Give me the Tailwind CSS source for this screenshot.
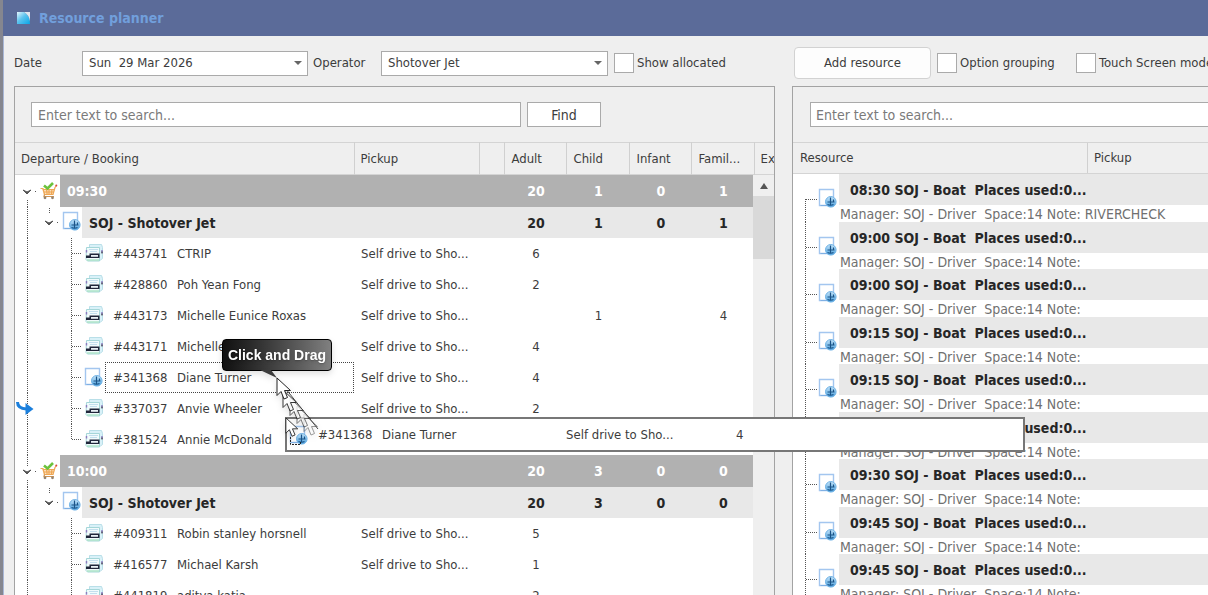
<!DOCTYPE html>
<html lang="en">
  <head>
    <meta charset="UTF-8" />
    <title>Resource planner</title>
    <script src="https://cdn.jsdelivr.net/npm/@tailwindcss/browser@4"></script>
  </head>
  <body
    class="relative h-screen overflow-hidden bg-[#efefef] font-['DejaVu_Sans_Condensed','Noto_Sans',sans-serif] text-[13px] leading-4 text-[#3c3c3c]"
  >
    <!-- icons -->
    <svg class="absolute size-0" aria-hidden="true">
      <defs>
        <linearGradient id="globe-fill" x1="0" y1="0" x2="0" y2="1">
          <stop offset="0" stop-color="#c4e4fa" />
          <stop offset="1" stop-color="#4a9fdc" />
        </linearGradient>
        <symbol id="doc" viewBox="0 0 20 20">
          <path d="M1.5 1.5h14v16h-14z" fill="#fff" stroke="#a3c6ef" stroke-width="1.4" />
          <path d="M2.5 17.5h13" stroke="#7fb0e4" />
          <circle cx="12.8" cy="13.8" r="5.3" fill="url(#globe-fill)" stroke="#6fb3e6" />
          <path d="M12.5 9.500v7.500M9.500 14h7M9.500 16.500q3 1.500 6 0M15.500 11.500v2" fill="none" stroke="#1b5488" stroke-width="1.2" />
        </symbol>
        <symbol id="printer" viewBox="0 0 20 20">
          <path d="M5.500 1.500h12l1 3v11l-2 1.500h-11z" fill="#d9f1f8" stroke="#b9dfe8" />
          <path d="M2.500 4.500h13v13.500h-12l-1.500-1.500z" fill="#f1fbfc" stroke="#a5d6d8" />
          <path d="M5 6.500h9M6 8.500h7" stroke="#c3dfee" />
          <path d="M2.500 7v2.500M18 7v3" stroke="#8d7cc0" stroke-width="1.400" />
          <path d="M17.500 8.500h1v2h-1z" fill="#333" />
          <path d="M2 12.500h3.500v-2h10v4.500h-13.500z" fill="#20263a" />
          <path d="M7 12h7v1.800h-7z" fill="#e9f1f5" />
          <path d="M3 17h12" stroke="#a9e3c4" stroke-width="1.400" />
        </symbol>
        <symbol id="cart" viewBox="0 0 18 18">
          <path d="M2 7l2 6h9l2-6z" fill="#fbe0bd" />
          <path d="M.5 6.500h2.500l1.500 6h8.500L15 5.500l1.500-2M3.500 7.500h11M4 10h10M6.500 7l.6 5M9 7v5M12 7l-.6 5" fill="none" stroke="#efa653" stroke-width="1.200" />
          <path d="M4.500 12.500l-.5 2h10" fill="none" stroke="#d09453" stroke-width="1.200" />
          <circle cx="5" cy="15.800" r="1.400" fill="#94836f" />
          <circle cx="12.500" cy="15.800" r="1.400" fill="#94836f" />
          <path d="M4 3.500l3.500 3L13 1" fill="none" stroke="#6cc23c" stroke-width="2.600" />
          <circle cx="16.300" cy="3.500" r="1" fill="#d8463a" />
        </symbol>
        <symbol id="chevron" viewBox="0 0 10 6">
          <path d="M1 1l4 4 4-4-4 2z" fill="#555" stroke="#555" />
        </symbol>
        <symbol id="pointer" viewBox="-1 -1 16 24">
          <path d="M0 0v17.500l4-4 3 7.500 3.500-1.500-3-7h6z" fill="#fff" stroke="#222" />
        </symbol>
      </defs>
    </svg>

    <div class="flex h-full flex-col border-l-3 border-[#85868f]">
      <header class="flex h-9 shrink-0 items-center gap-2 bg-[#5b6b99] pl-3.5">
        <svg class="size-3.5" viewBox="0 0 14 14" aria-hidden="true">
          <defs>
            <linearGradient id="logo-fill" x1="0" y1="0" x2="1" y2="1">
              <stop offset="0" stop-color="#e6f6fd" />
              <stop offset=".45" stop-color="#5cc3ee" />
              <stop offset="1" stop-color="#08a5e6" />
            </linearGradient>
          </defs>
          <path d="M0 1h7q6 3 6 12H0z" fill="url(#logo-fill)" />
          <path d="M7 1h6v9q-1-6-6-9z" fill="#dfe6ee" />
        </svg>
        <h1 class="text-sm font-bold text-[#719fdc]">Resource planner</h1>
      </header>

      <main class="flex min-h-0 flex-1 gap-[17px] border-l border-[#a9b7d6] pl-2.5">
        <!-- departures -->
        <section class="flex w-[761px] shrink-0 flex-col">
          <div class="flex h-[50px] shrink-0 items-center pt-1">
            <label for="date" class="w-[68px]">Date</label>
            <div class="relative w-[226px]">
              <select id="date" class="block h-[25px] w-full appearance-none border border-[#aaa] bg-white px-1.5">
                <option>Sun&nbsp; 29 Mar 2026</option>
              </select>
              <svg class="pointer-events-none absolute top-2.5 right-1.5 h-1 w-2" viewBox="0 0 8 4" aria-hidden="true"><path d="M0 0h8L4 4z" fill="#666" /></svg>
            </div>
            <label for="operator" class="w-[73px] pl-[5px]">Operator</label>
            <div class="relative w-[227px]">
              <select id="operator" class="block h-[25px] w-full appearance-none border border-[#aaa] bg-white px-1.5">
                <option>Shotover Jet</option>
              </select>
              <svg class="pointer-events-none absolute top-2.5 right-1.5 h-1 w-2" viewBox="0 0 8 4" aria-hidden="true"><path d="M0 0h8L4 4z" fill="#666" /></svg>
            </div>
            <input id="allocated" type="checkbox" class="ml-1.5 size-5 appearance-none border border-[#aaa] bg-white" />
            <label for="allocated" class="pl-[3px]">Show allocated</label>
          </div>

          <div class="relative min-h-0 flex-1 overflow-hidden border border-b-0 border-[#a3a3a3]">
            <form class="flex h-[55px] items-center gap-1.5 pl-4">
              <input type="text" aria-label="Search bookings" placeholder="Enter text to search..." class="h-[25px] w-[490px] border border-[#aaa] bg-white px-1.5 text-sm placeholder:text-[#7a7a7a]" />
              <button type="button" class="h-[25px] w-[74px] border border-[#aaa] bg-white text-sm">Find</button>
            </form>
            <table class="w-full table-fixed border-collapse text-left">
              <thead>
                <tr class="h-8 border-y border-[#d4d4d4]">
                  <th class="border-r border-[#d0d0d0] px-1.5 font-normal">Departure / Booking</th>
                  <th class="w-[125px] border-r border-[#d0d0d0] px-1.5 font-normal">Pickup</th>
                  <th class="w-[25px] border-r border-[#d0d0d0]"></th>
                  <th class="w-[62px] border-r border-[#d0d0d0] px-[7px] font-normal">Adult</th>
                  <th class="w-[63px] border-r border-[#d0d0d0] px-[7px] font-normal">Child</th>
                  <th class="w-[62px] border-r border-[#d0d0d0] px-[7px] font-normal">Infant</th>
                  <th class="w-[63px] border-r border-[#d0d0d0] px-[7px] font-normal">Famil...</th>
                  <th class="w-5 overflow-hidden pl-1.5 font-normal">Ex</th>
                </tr>
              </thead>
              <tbody id="bookings" class="bg-white"></tbody>
            </table>
            <!-- scrollbar -->
            <div class="absolute top-[88px] right-0 bottom-0 w-[21px] bg-[#efefef]">
              <div class="flex h-[21px] items-center justify-center">
                <svg class="h-1.5 w-2" viewBox="0 0 8 6" aria-hidden="true"><path d="M0 6h8L4 0z" fill="#555" /></svg>
              </div>
              <div class="h-[63px] bg-[#d9d9d9]"></div>
            </div>
          </div>
        </section>

        <!-- resources -->
        <section class="flex min-w-0 flex-1 flex-col">
          <div class="flex h-[50px] shrink-0 items-center pt-1 whitespace-nowrap">
            <button type="button" class="ml-0.5 h-8 w-[137px] shrink-0 rounded border border-[#d2d2d2] bg-[#fdfdfd]">Add resource</button>
            <input id="grouping" type="checkbox" class="ml-1.5 size-5 shrink-0 appearance-none border border-[#aaa] bg-white" />
            <label for="grouping" class="w-[119px] shrink-0 pl-[3px]">Option grouping</label>
            <input id="touch" type="checkbox" class="size-5 shrink-0 appearance-none border border-[#aaa] bg-white" />
            <label for="touch" class="pl-[3px]">Touch Screen mode</label>
          </div>

          <div class="min-h-0 flex-1 overflow-hidden border-t border-l border-[#a3a3a3] bg-white">
            <form class="flex h-[55px] items-center bg-[#efefef] pl-[17px]">
              <input type="text" aria-label="Search resources" placeholder="Enter text to search..." class="h-[25px] flex-1 border border-r-0 border-[#aaa] bg-white px-[5px] text-sm placeholder:text-[#7a7a7a]" />
            </form>
            <div class="flex h-8 items-center border-y border-[#d4d4d4] bg-[#efefef]">
              <div class="flex h-full w-[295px] items-center border-r border-[#d0d0d0] px-[7px]">Resource</div>
              <div class="px-1.5">Pickup</div>
            </div>
            <ul id="resources"></ul>
          </div>
        </section>
      </main>
    </div>

    <!-- row being dragged -->
    <div class="absolute top-[417px] left-[285px] flex h-[35px] w-[740px] items-center border-2 border-[#777] bg-white">
      <svg class="ml-0.5 size-5" aria-hidden="true"><use href="#doc" /></svg>
      <span class="ml-[9px] w-16">#341368</span>
      <span class="w-[184px]">Diane Turner</span>
      <span class="w-[170px]">Self drive to Sho...</span>
      <span>4</span>
    </div>

    <!-- drop position marker -->
    <svg class="absolute top-[402px] left-4 h-3.5 w-[18px]" viewBox="0 0 18 14" aria-hidden="true">
      <path d="M1.500 0q0 6.500 9 7" fill="none" stroke="#1b7fdc" stroke-width="3" />
      <path d="M9.500 1l8 6-8 6z" fill="#1b7fdc" />
    </svg>

    <!-- pointer trail -->
    <svg class="absolute top-[370px] left-[270px] h-20 w-16 drop-shadow-md" viewBox="270 370 64 80" aria-hidden="true">
      <use href="#pointer" x="303" y="413" width="16" height="24" opacity=".45" />
      <use href="#pointer" x="296" y="405" width="16" height="24" opacity=".6" />
      <use href="#pointer" x="289" y="397" width="16" height="24" opacity=".75" />
      <use href="#pointer" x="282" y="389" width="16" height="24" opacity=".9" />
      <path d="M277 378L318 429" stroke="#444" />
      <use href="#pointer" x="276" y="377" width="16" height="24" />
      <path d="M290.500 437v7.500h10v-3" fill="none" stroke="#222" stroke-dasharray="2 1" />
      <use href="#pointer" x="285" y="417" width="14" height="21" />
    </svg>

    <!-- callout -->
    <div class="absolute top-[339px] left-[222px] drop-shadow-md">
      <div class="flex h-8 w-[110px] items-center justify-center rounded border border-black bg-linear-to-r from-[#111] to-[#808080] font-['Liberation_Sans',sans-serif] text-sm font-bold text-white text-shadow-md">
        Click and Drag
      </div>
      <svg class="absolute top-[31px] left-[38px] h-2 w-[18px]" viewBox="0 0 18 8" aria-hidden="true"><path d="M0 0h11l6 8z" fill="#3c3c3c" /></svg>
    </div>

    <script>
      // booking: id, name, icon, pickup, adult, child, family
      const pickup = 'Self drive to Sho...';
      const departures = [
        {
          time: '09:30',
          totals: [20, 1, 0, 1],
          bookings: [
            ['#443741', 'CTRIP', 'printer', pickup, 6, '', ''],
            ['#428860', 'Poh Yean Fong', 'printer', pickup, 2, '', ''],
            ['#443173', 'Michelle Eunice Roxas', 'printer', pickup, '', 1, 4],
            ['#443171', 'Michelle', 'printer', pickup, 4, '', ''],
            ['#341368', 'Diane Turner', 'doc', pickup, 4, '', ''],
            ['#337037', 'Anvie Wheeler', 'printer', pickup, 2, '', ''],
            ['#381524', 'Annie McDonald', 'printer', '', '', '', ''],
          ],
        },
        {
          time: '10:00',
          totals: [20, 3, 0, 0],
          bookings: [
            ['#409311', 'Robin stanley horsnell', 'printer', pickup, 5, '', ''],
            ['#416577', 'Michael Karsh', 'printer', pickup, 1, '', ''],
            ['#441819', 'aditya katia', 'printer', '', 2, '', ''],
          ],
        },
      ];

      const cells = (values, bg) =>
        values.map((v) => `<td class="pl-0.5 text-center ${bg}">${v}</td>`).join('');

      const line = (d) =>
        `<path d="${d}" fill="none" stroke="#555" stroke-dasharray="1 1" />`;

      let rows = '';
      departures.forEach((dep, i) => {
        rows += `
          <tr class="h-8 text-sm leading-4 font-bold text-white">
            <td class="p-0">
              <div class="flex h-8 items-center">
                <svg class="h-8 w-[45px] shrink-0" aria-hidden="true">
                  ${line(i ? 'M12.500 0v12M12.500 25v7M20 16.500h2' : 'M12.500 25v7M20 16.500h2')}
                  <use href="#chevron" x="7" y="14" width="10" height="6" />
                  <use href="#cart" x="25" y="7" width="18" height="18" />
                </svg>
                <span class="flex h-full flex-1 items-center bg-[#b1b1b1] pl-[7px]">${dep.time}</span>
              </div>
            </td>
            <td class="bg-[#b1b1b1]"></td><td class="bg-[#b1b1b1]"></td>
            ${cells(dep.totals, 'bg-[#b1b1b1]')}
            <td></td>
          </tr>
          <tr class="h-[31px] text-sm leading-4 font-bold text-[#262626]">
            <td class="p-0">
              <div class="flex h-[31px] items-center">
                <svg class="h-[31px] w-[67px] shrink-0" aria-hidden="true">
                  ${line('M12.500 0v31M34.500 1v6M42 15.500h2')}
                  <use href="#chevron" x="29" y="13" width="10" height="6" />
                  <use href="#doc" x="47" y="4" width="20" height="20" />
                </svg>
                <span class="flex h-full flex-1 items-center bg-[#e8e8e8] pl-[7px]">SOJ - Shotover Jet</span>
              </div>
            </td>
            <td class="bg-[#e8e8e8]"></td><td class="bg-[#e8e8e8]"></td>
            ${cells(dep.totals, 'bg-[#e8e8e8]')}
            <td></td>
          </tr>`;
        dep.bookings.forEach(([id, name, icon, from, adult, child, family], j) => {
          const last = j === dep.bookings.length - 1;
          const box = icon === 'doc' ? 'border-[#444]' : 'border-transparent';
          rows += `
            <tr class="h-[31px]">
              <td class="p-0">
                <div class="flex h-[31px] items-center">
                  <svg class="h-[31px] w-[90px] shrink-0" aria-hidden="true">
                    ${line(`M12.500 0v31M56.500 0v${last ? 16 : 31}M57 15.500h10`)}
                    <use href="#${icon}" x="69" y="5" width="20" height="20" />
                  </svg>
                  <span class="flex h-full flex-1 items-center border border-dotted pl-[7px] whitespace-nowrap ${box}">
                    <span class="w-16">${id}</span>${name}
                  </span>
                </div>
              </td>
              <td class="px-[7px] whitespace-nowrap">${from}</td>
              <td></td>
              ${cells([adult, child, '', family], 'bg-white')}
              <td></td>
            </tr>`;
        });
      });
      document.getElementById('bookings').innerHTML = rows;

      const times = ['08:30', '09:00', '09:00', '09:15', '09:15', '09:30', '09:30', '09:45', '09:45'];
      document.getElementById('resources').innerHTML = times
        .map(
          (time, i) => `
          <li class="flex odd:pb-px">
            <svg class="h-[47px] w-[46px] shrink-0 overflow-visible" aria-hidden="true">
              ${line(`M12.500 ${i ? 0 : 25}V48M13 25.500h11`)}
              <use href="#doc" x="25" y="14" width="20" height="20" />
            </svg>
            <div class="flex-1 text-sm whitespace-nowrap">
              <div class="flex h-[31px] items-center bg-[#e8e8e8] pl-[11px] font-bold text-[#262626]">${time} SOJ - Boat&nbsp; Places used:0...</div>
              <div class="h-4 pl-px leading-[18px] text-[#707070]">Manager: SOJ - Driver&nbsp; Space:14&nbsp;Note:${i ? '' : ' RIVERCHECK'}</div>
            </div>
          </li>`
        )
        .join('');
    </script>
  </body>
</html>
